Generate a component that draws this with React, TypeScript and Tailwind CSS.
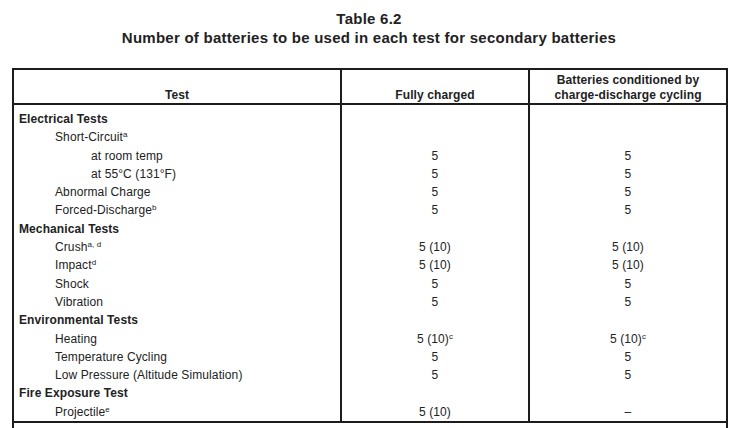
const rows: { label: string; sup?: string; level: 0 | 1 | 2; a?: string; aSup?: string; b?: string; bSup?: string }[] = [
  { label: 'Electrical Tests', level: 0 },
  { label: 'Short-Circuit', sup: 'a', level: 1 },
  { label: 'at room temp', level: 2, a: '5', b: '5' },
  { label: 'at 55°C (131°F)', level: 2, a: '5', b: '5' },
  { label: 'Abnormal Charge', level: 1, a: '5', b: '5' },
  { label: 'Forced-Discharge', sup: 'b', level: 1, a: '5', b: '5' },
  { label: 'Mechanical Tests', level: 0 },
  { label: 'Crush', sup: 'a, d', level: 1, a: '5 (10)', b: '5 (10)' },
  { label: 'Impact', sup: 'd', level: 1, a: '5 (10)', b: '5 (10)' },
  { label: 'Shock', level: 1, a: '5', b: '5' },
  { label: 'Vibration', level: 1, a: '5', b: '5' },
  { label: 'Environmental Tests', level: 0 },
  { label: 'Heating', level: 1, a: '5 (10)', aSup: 'c', b: '5 (10)', bSup: 'c' },
  { label: 'Temperature Cycling', level: 1, a: '5', b: '5' },
  { label: 'Low Pressure (Altitude Simulation)', level: 1, a: '5', b: '5' },
  { label: 'Fire Exposure Test', level: 0 },
  { label: 'Projectile', sup: 'e', level: 1, a: '5 (10)', b: '–' },
];

const indent = ['pl-[5px] font-bold', 'pl-[41px]', 'pl-[77px]'];

const Sup = ({ children }: { children: React.ReactNode }) => (
  <sup className="text-[8px] leading-none relative -top-[4px]">{children}</sup>
);

export default function App() {
  return (
    <div className="min-h-screen bg-white text-[#222] font-['Liberation_Sans',Arial,sans-serif]">
      <div className="ml-[12px] w-[714px] pt-[9px] text-center font-bold text-[15px] tracking-[0.25px] leading-[19px]">
        <div>Table 6.2</div>
        <div>Number of batteries to be used in each test for secondary batteries</div>
      </div>

      <table className="ml-[12px] mt-[21px] w-[714px] border-collapse text-[12px] tracking-[0.1px] leading-[18.3px] table-fixed">
        <colgroup>
          <col className="w-[328px]" />
          <col className="w-[188px]" />
          <col className="w-[198px]" />
        </colgroup>
        <thead>
          <tr className="h-[35px]">
            <th className="border-2 border-[#1c1c1c] align-bottom font-bold leading-[15px] pb-0">Test</th>
            <th className="border-2 border-[#1c1c1c] align-bottom font-bold leading-[15px] pb-0">Fully charged</th>
            <th className="border-2 border-[#1c1c1c] align-bottom font-bold leading-[15px] pb-0">
              Batteries conditioned by
              <br />
              charge-discharge cycling
            </th>
          </tr>
        </thead>
        <tbody>
          {rows.map((r, i) => (
            <tr key={i}>
              <td className={`border-x-2 border-[#1c1c1c] text-left ${indent[r.level]} ${i === 0 ? 'pt-[5px]' : ''}`}>
                {r.label}
                {r.sup && <Sup>{r.sup}</Sup>}
              </td>
              <td className={`border-x-2 border-[#1c1c1c] text-center ${i === 0 ? 'pt-[5px]' : ''}`}>
                {r.a}
                {r.aSup && <Sup>{r.aSup}</Sup>}
              </td>
              <td className={`border-x-2 border-[#1c1c1c] text-center ${i === 0 ? 'pt-[5px]' : ''}`}>
                {r.b}
                {r.bSup && <Sup>{r.bSup}</Sup>}
              </td>
            </tr>
          ))}
          <tr>
            <td colSpan={3} className="border-2 border-[#1c1c1c] h-[40px]"></td>
          </tr>
        </tbody>
      </table>
    </div>
  );
}
